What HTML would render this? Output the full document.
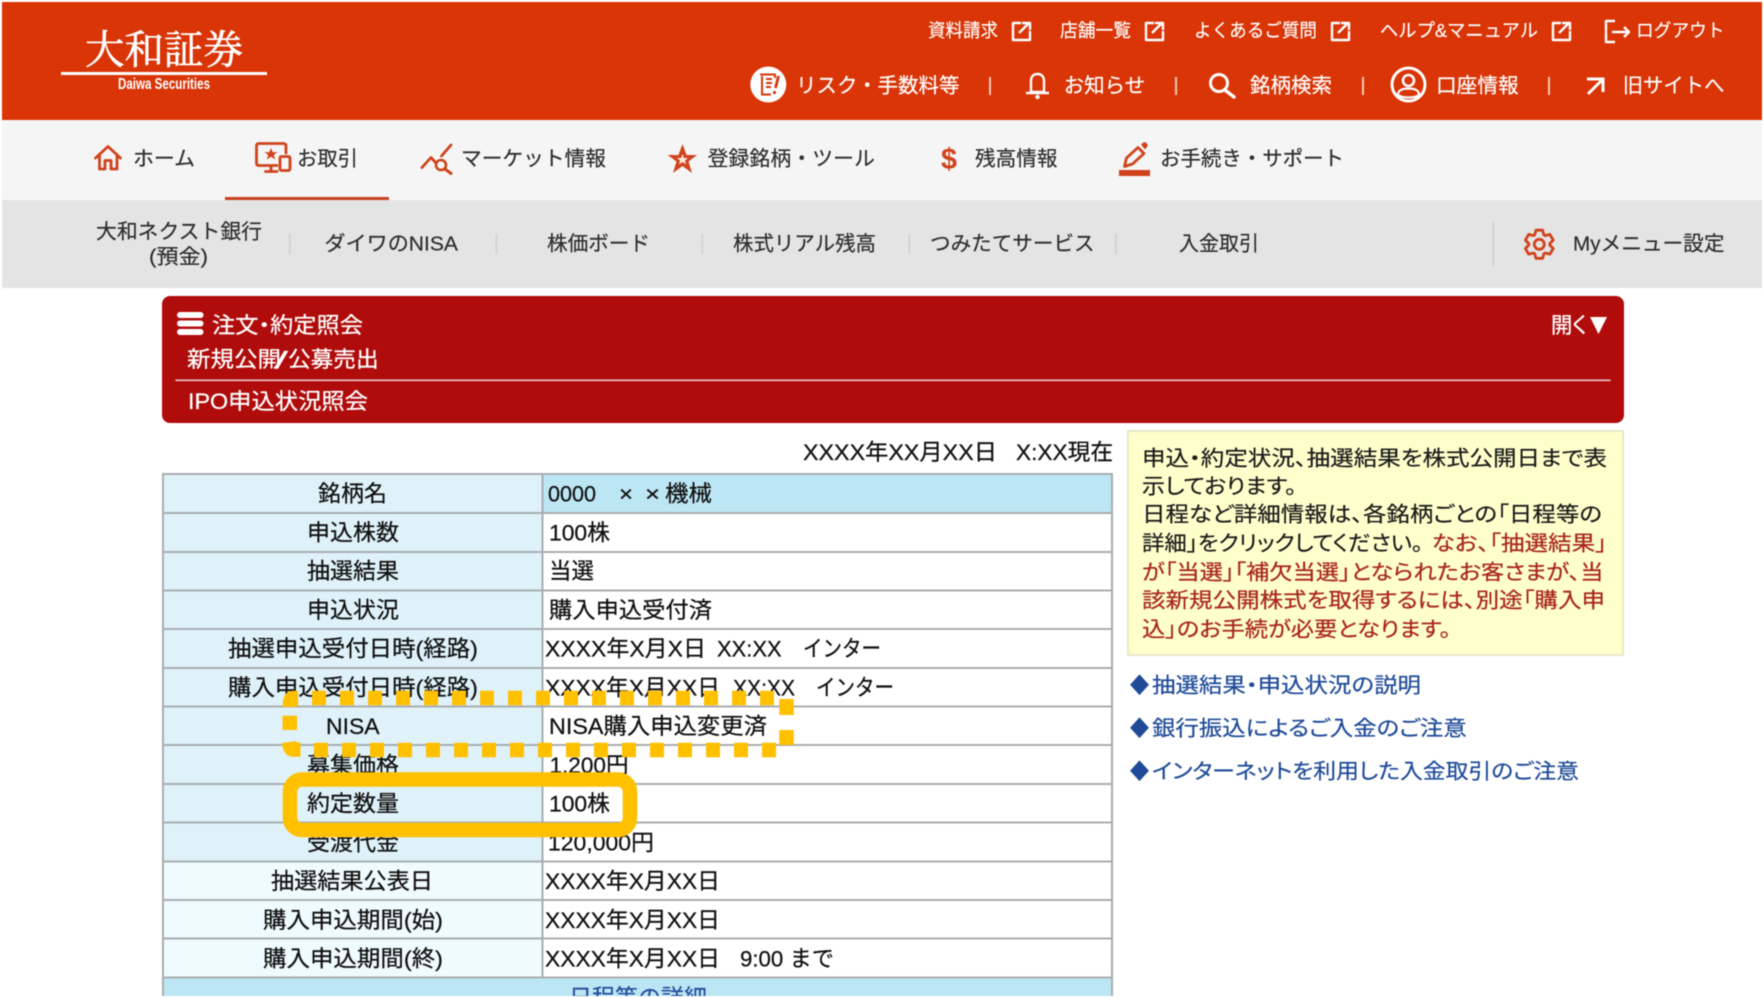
<!DOCTYPE html>
<html lang="ja">
<head>
<meta charset="utf-8">
<title>大和証券 IPO申込状況照会</title>
<style>
html,body{margin:0;padding:0;background:#fff;width:1764px;height:998px;overflow:hidden}
svg{display:block;position:absolute;left:0;top:0;filter:blur(.4px)}
text{font-family:"Liberation Sans","Noto Sans CJK JP",sans-serif}
.h1{font-size:18.5px;fill:#fff;stroke:#fff;stroke-width:.15}
.h2{font-size:20.5px;fill:#fff;stroke:#fff;stroke-width:.2}
.n{font-size:20.5px;fill:#2e2e2e;stroke:#2e2e2e;stroke-width:.2}
.s{font-size:20.5px;fill:#2e2e2e;stroke:#2e2e2e;stroke-width:.2}
.r{font-size:22px;fill:#fff;stroke:#fff;stroke-width:.25;font-feature-settings:"palt"}
.t{font-size:22.5px;fill:#111;stroke:#111;stroke-width:.25}
.c{font-size:21px;fill:#1a1a1a;stroke:#1a1a1a;stroke-width:.2;font-feature-settings:"palt"}
.e{font-size:21px;fill:#a8241a;stroke:#a8241a;stroke-width:.2;font-feature-settings:"palt"}
.l{font-size:21px;fill:#1e4a98;stroke:#1e4a98;stroke-width:.2;font-feature-settings:"palt"}
.ico{fill:none;stroke:#d0431c;stroke-width:2.8;stroke-linecap:round;stroke-linejoin:round}
.w{fill:none;stroke:#fff;stroke-width:2.4;stroke-linejoin:round}
</style>
</head>
<body>
<svg width="1764" height="998" viewBox="0 0 1764 998" xmlns="http://www.w3.org/2000/svg">
<rect width="1764" height="998" fill="#fff"/>
<!-- header -->
<rect x="2" y="2" width="1760" height="118" fill="#d93507"/>
<rect x="2" y="120" width="1760" height="80" fill="#f5f5f5"/>
<rect x="2" y="200" width="1760" height="88" fill="#e4e4e4"/>
<!-- logo -->
<text x="85" y="63.5" font-size="40" fill="#fff" stroke="#fff" stroke-width=".6" textLength="158" lengthAdjust="spacingAndGlyphs" style="font-family:'Liberation Serif','Noto Serif CJK SC',serif">大和証券</text>
<rect x="61" y="72" width="206" height="3" fill="#fff"/>
<text x="118" y="89" font-size="16" font-weight="700" fill="#fff" textLength="92" lengthAdjust="spacingAndGlyphs">Daiwa Securities</text>
<!-- top links -->
<text class="h1" x="928" y="37" textLength="70" lengthAdjust="spacingAndGlyphs">資料請求</text>
<g transform="translate(1011,21)"><path class="w" d="M10 2H2V19H19V10M8 12L18 2M11 2H19V9"/></g>
<text class="h1" x="1060" y="37" textLength="71" lengthAdjust="spacingAndGlyphs">店舗一覧</text>
<g transform="translate(1144,21)"><path class="w" d="M10 2H2V19H19V10M8 12L18 2M11 2H19V9"/></g>
<text class="h1" x="1194" y="37" textLength="123" lengthAdjust="spacingAndGlyphs">よくあるご質問</text>
<g transform="translate(1330,21)"><path class="w" d="M10 2H2V19H19V10M8 12L18 2M11 2H19V9"/></g>
<text class="h1" x="1380" y="37" textLength="158" lengthAdjust="spacingAndGlyphs">ヘルプ&amp;マニュアル</text>
<g transform="translate(1551,21)"><path class="w" d="M10 2H2V19H19V10M8 12L18 2M11 2H19V9"/></g>
<path class="w" d="M1615 21H1606V42H1615M1612 32H1629M1624 27L1629 32L1624 37" stroke-width="2.6"/>
<text class="h1" x="1636" y="37" textLength="88.5" lengthAdjust="spacingAndGlyphs">ログアウト</text>
<!-- second row -->
<circle cx="768.3" cy="84.5" r="18" fill="#fff"/>
<path d="M760 74.5H775V78M762 76V94.5H771M766 79H772M766 83H772M766 87H771" fill="none" stroke="#d93507" stroke-width="2"/>
<path d="M778.5 76L775.5 88" stroke="#d93507" stroke-width="2.8"/>
<circle cx="774.5" cy="92.5" r="1.6" fill="#d93507"/>
<text class="h2" x="796" y="92.5" textLength="163.5" lengthAdjust="spacingAndGlyphs">リスク・手数料等</text>
<rect x="989" y="77" width="2" height="18" fill="#f6c9b8"/>
<path class="w" d="M1031 92V81C1031 76 1034 74 1037.5 74C1041 74 1044 76 1044 81V92Z M1026 93H1049" stroke-width="2.6"/>
<circle cx="1037.5" cy="97" r="2.2" fill="#fff"/>
<text class="h2" x="1063.7" y="92.5" textLength="81.5" lengthAdjust="spacingAndGlyphs">お知らせ</text>
<rect x="1175" y="77" width="2" height="18" fill="#f6c9b8"/>
<circle cx="1219" cy="83" r="8.5" fill="none" stroke="#fff" stroke-width="3"/>
<path d="M1225 90L1234 97" stroke="#fff" stroke-width="3.4" stroke-linecap="round"/>
<text class="h2" x="1250" y="92.5" textLength="82" lengthAdjust="spacingAndGlyphs">銘柄検索</text>
<rect x="1362" y="77" width="2" height="18" fill="#f6c9b8"/>
<circle cx="1408.5" cy="84.5" r="16.5" fill="none" stroke="#fff" stroke-width="3"/>
<circle cx="1408.5" cy="80.5" r="5.5" fill="none" stroke="#fff" stroke-width="2.6"/>
<path d="M1398 94.5C1398 90 1403 88.5 1408.5 88.5C1414 88.5 1419 90 1419 94.5C1416 98.5 1401 98.5 1398 94.5Z" fill="none" stroke="#fff" stroke-width="2.2"/>
<text class="h2" x="1436" y="92.5" textLength="82.7" lengthAdjust="spacingAndGlyphs">口座情報</text>
<rect x="1548" y="77" width="2" height="18" fill="#f6c9b8"/>
<path d="M1587 79H1603V92M1603 79L1588 94" fill="none" stroke="#fff" stroke-width="3"/>
<text class="h2" x="1622.7" y="92.5" textLength="101.8" lengthAdjust="spacingAndGlyphs">旧サイトへ</text>
<!-- main nav -->
<path class="ico" d="M95.5 158L108 146.5L120.5 158M99.5 156V169H105V160.5H111V169H117V156"/>
<text class="n" x="133" y="165.5" textLength="62" lengthAdjust="spacingAndGlyphs">ホーム</text>
<path class="ico" d="M286 153V146Q286 143.5 283 143.5H259Q256.5 143.5 256.5 146V163Q256.5 165.5 259 165.5H277M271 166V171M265.5 171.5H277"/>
<rect class="ico" x="280" y="156.5" width="10" height="14" rx="1.5" stroke-width="2.2"/>
<path d="M271 148L272.8 152.2H277.4L273.8 155L275.2 159.5L271 156.8L266.8 159.5L268.2 155L264.6 152.2H269.2Z" fill="#d0431c"/>
<text class="n" x="297" y="165.5" textLength="61" lengthAdjust="spacingAndGlyphs">お取引</text>
<rect x="225" y="197" width="164" height="3" fill="#c8401f"/>
<path class="ico" d="M422 167.5L431 157.5L436 163M441.5 156L451 145"/>
<circle cx="441" cy="165" r="5" fill="none" stroke="#d0431c" stroke-width="2.6"/>
<path d="M445 169L451 173.5" stroke="#d0431c" stroke-width="3" stroke-linecap="round"/>
<text class="n" x="461" y="165.5" textLength="145" lengthAdjust="spacingAndGlyphs">マーケット情報</text>
<path d="M682.5 144L686.5 155H697L688.5 161.5L692 173L682.5 166L673 173L676.5 161.5L667.6 155H678.5Z" fill="#d0431c"/>
<path d="M682.5 154L684 158H688L685 160.5L686 164.5L682.5 162L679 164.5L680 160.5L677 158H681Z" fill="#fbe6df"/>
<text class="n" x="707.5" y="165.5" textLength="167.5" lengthAdjust="spacingAndGlyphs">登録銘柄・ツール</text>
<text x="941" y="169" font-size="30" font-weight="700" fill="#d0431c" textLength="16" lengthAdjust="spacingAndGlyphs" style="font-family:'Liberation Sans',sans-serif">$</text>
<text class="n" x="975" y="165.5" textLength="82.5" lengthAdjust="spacingAndGlyphs">残高情報</text>
<path class="ico" d="M1124.5 166.5L1126.5 158L1138 147.5L1144 153.5L1132.5 164Z"/>
<path d="M1141 144.5L1143.5 142.5Q1145 141.5 1146.5 143L1147.5 144.5Q1148 146 1147 147L1145 149.5Z" fill="#d0431c"/>
<rect x="1119" y="170" width="31" height="6" fill="#d0431c"/>
<text class="n" x="1160" y="165.5" textLength="184" lengthAdjust="spacingAndGlyphs">お手続き・サポート</text>
<!-- sub nav -->
<text class="s" x="96" y="238.5" textLength="166" lengthAdjust="spacingAndGlyphs">大和ネクスト銀行</text>
<text class="s" x="149" y="263.5" textLength="59" lengthAdjust="spacingAndGlyphs">(預金)</text>
<g fill="#cfcfcf">
<rect x="289" y="234" width="1.6" height="20"/><rect x="495.5" y="234" width="1.6" height="20"/><rect x="701.5" y="234" width="1.6" height="20"/><rect x="908.5" y="234" width="1.6" height="20"/><rect x="1115" y="234" width="1.6" height="20"/><rect x="1492.5" y="222" width="1.6" height="44"/>
</g>
<text class="s" x="324.5" y="250.5" textLength="133.5" lengthAdjust="spacingAndGlyphs">ダイワのNISA</text>
<text class="s" x="547" y="250.5" textLength="103" lengthAdjust="spacingAndGlyphs">株価ボード</text>
<text class="s" x="733" y="250.5" textLength="143" lengthAdjust="spacingAndGlyphs">株式リアル残高</text>
<text class="s" x="930" y="250.5" textLength="164.6" lengthAdjust="spacingAndGlyphs">つみたてサービス</text>
<text class="s" x="1179" y="250.5" textLength="80" lengthAdjust="spacingAndGlyphs">入金取引</text>
<g transform="translate(1539.3,244.3)">
<path d="M-4.6 -9.4L-3.3 -14.1L3.3 -14.1L4.6 -9.4L5.9 -8.7L10.6 -9.9L13.9 -4.2L10.5 -.7L10.5 .7L13.9 4.2L10.6 9.9L5.9 8.7L4.6 9.4L3.3 14.1L-3.3 14.1L-4.6 9.4L-5.9 8.7L-10.6 9.9L-13.9 4.2L-10.5 .7L-10.5 -.7L-13.9 -4.2L-10.6 -9.9L-5.9 -8.7Z" fill="none" stroke="#d0431c" stroke-width="2.8" stroke-linejoin="round"/>
<circle r="5" fill="none" stroke="#d0431c" stroke-width="2.8"/>
</g>
<text class="s" x="1573" y="250.5" textLength="151.5" lengthAdjust="spacingAndGlyphs">Myメニュー設定</text>
<!-- red title box -->
<rect x="162" y="296" width="1462" height="127" rx="8" fill="#b00c0c"/>
<g fill="#fff"><rect x="177" y="312" width="26.5" height="6" rx="3"/><rect x="177" y="320.5" width="26.5" height="6" rx="3"/><rect x="177" y="329" width="26.5" height="6" rx="3"/></g>
<text class="r" x="212" y="333" textLength="151" lengthAdjust="spacingAndGlyphs">注文・約定照会</text>
<text class="r" x="187" y="367" textLength="94" lengthAdjust="spacingAndGlyphs">新規公開</text>
<text class="r" x="275" y="367" textLength="13" lengthAdjust="spacingAndGlyphs">/</text>
<text class="r" x="288" y="367" textLength="90.6" lengthAdjust="spacingAndGlyphs">公募売出</text>
<rect x="175.5" y="379.5" width="1435" height="1.6" fill="#ecc9c9"/>
<text class="r" x="188" y="409" textLength="180" lengthAdjust="spacingAndGlyphs">IPO申込状況照会</text>
<text class="r" x="1551" y="333" textLength="36" lengthAdjust="spacingAndGlyphs">開く</text>
<path d="M1590 317H1607L1598.5 334Z" fill="#fff"/>
<!-- date -->
<text class="t" x="803" y="460" textLength="194" lengthAdjust="spacingAndGlyphs">XXXX年XX月XX日</text>
<text class="t" x="1016" y="460" textLength="97" lengthAdjust="spacingAndGlyphs">X:XX現在</text>
<!-- table -->
<rect x="163" y="474" width="379" height="387.5" fill="#dff2f9"/>
<rect x="163" y="861.5" width="379" height="116" fill="#f0fbff"/>
<rect x="542" y="474" width="570" height="38.75" fill="#bde6f4"/>
<rect x="163" y="977.5" width="949" height="20" fill="#bde6f4"/>
<g fill="#a9adb0">
<rect x="163" y="473" width="949" height="2"/><rect x="163" y="512" width="949" height="2"/><rect x="163" y="551" width="949" height="2"/><rect x="163" y="589.5" width="949" height="2"/><rect x="163" y="628" width="949" height="2"/><rect x="163" y="667" width="949" height="2"/><rect x="163" y="705.5" width="949" height="2"/><rect x="163" y="744" width="949" height="2"/><rect x="163" y="783" width="949" height="2"/><rect x="163" y="821.5" width="949" height="2"/><rect x="163" y="860.5" width="949" height="2"/><rect x="163" y="899" width="949" height="2"/><rect x="163" y="937.5" width="949" height="2"/><rect x="163" y="976.5" width="949" height="2"/>
<rect x="162" y="473" width="2" height="525"/><rect x="541.5" y="473" width="2" height="504"/><rect x="1111" y="473" width="2" height="525"/>
</g>
<text class="t" x="318" y="501.7" textLength="69" lengthAdjust="spacingAndGlyphs">銘柄名</text>
<text class="t" x="307" y="540.5" textLength="92" lengthAdjust="spacingAndGlyphs">申込株数</text>
<text class="t" x="307" y="579.2" textLength="92" lengthAdjust="spacingAndGlyphs">抽選結果</text>
<text class="t" x="307" y="618" textLength="92" lengthAdjust="spacingAndGlyphs">申込状況</text>
<text class="t" x="228" y="656.7" textLength="250" lengthAdjust="spacingAndGlyphs">抽選申込受付日時(経路)</text>
<text class="t" x="228" y="695.5" textLength="250" lengthAdjust="spacingAndGlyphs">購入申込受付日時(経路)</text>
<text class="t" x="326" y="734.2" textLength="53.6" lengthAdjust="spacingAndGlyphs">NISA</text>
<text class="t" x="307" y="773" textLength="92" lengthAdjust="spacingAndGlyphs">募集価格</text>
<text class="t" x="307" y="811.7" textLength="92" lengthAdjust="spacingAndGlyphs">約定数量</text>
<text class="t" x="307" y="850.5" textLength="92" lengthAdjust="spacingAndGlyphs">受渡代金</text>
<text class="t" x="271" y="889.2" textLength="162" lengthAdjust="spacingAndGlyphs">抽選結果公表日</text>
<text class="t" x="263" y="928" textLength="180" lengthAdjust="spacingAndGlyphs">購入申込期間(始)</text>
<text class="t" x="263" y="966.7" textLength="180" lengthAdjust="spacingAndGlyphs">購入申込期間(終)</text>
<text class="t" x="548" y="501.7" textLength="48" lengthAdjust="spacingAndGlyphs">0000</text>
<text class="t" x="619" y="501.7" textLength="14" lengthAdjust="spacingAndGlyphs">×</text>
<text class="t" x="645" y="501.7" textLength="15" lengthAdjust="spacingAndGlyphs">×</text>
<text class="t" x="665" y="501.7" textLength="47" lengthAdjust="spacingAndGlyphs">機械</text>
<text class="t" x="549" y="540.5" textLength="61" lengthAdjust="spacingAndGlyphs">100株</text>
<text class="t" x="549" y="579.2" textLength="45" lengthAdjust="spacingAndGlyphs">当選</text>
<text class="t" x="549" y="618" textLength="163" lengthAdjust="spacingAndGlyphs">購入申込受付済</text>
<text class="t" x="545" y="656.7" textLength="161" lengthAdjust="spacingAndGlyphs">XXXX年X月X日</text>
<text class="t" x="717" y="656.7" textLength="64.6" lengthAdjust="spacingAndGlyphs">XX:XX</text>
<text class="t" x="803" y="656.7" textLength="78" lengthAdjust="spacingAndGlyphs">インター</text>
<text class="t" x="545" y="695.5" textLength="175" lengthAdjust="spacingAndGlyphs">XXXX年X月XX日</text>
<text class="t" x="733" y="695.5" textLength="62" lengthAdjust="spacingAndGlyphs">XX:XX</text>
<text class="t" x="816" y="695.5" textLength="78" lengthAdjust="spacingAndGlyphs">インター</text>
<text class="t" x="549" y="734.2" textLength="218" lengthAdjust="spacingAndGlyphs">NISA購入申込変更済</text>
<text class="t" x="549.5" y="773" textLength="79" lengthAdjust="spacingAndGlyphs">1,200円</text>
<text class="t" x="549" y="811.7" textLength="61" lengthAdjust="spacingAndGlyphs">100株</text>
<text class="t" x="548" y="850.5" textLength="106" lengthAdjust="spacingAndGlyphs">120,000円</text>
<text class="t" x="545" y="889.2" textLength="175" lengthAdjust="spacingAndGlyphs">XXXX年X月XX日</text>
<text class="t" x="545" y="928" textLength="175" lengthAdjust="spacingAndGlyphs">XXXX年X月XX日</text>
<text class="t" x="545" y="966.7" textLength="175" lengthAdjust="spacingAndGlyphs">XXXX年X月XX日</text>
<text class="t" x="740" y="966.7" textLength="94" lengthAdjust="spacingAndGlyphs">9:00 まで</text>
<text class="t" x="569" y="1005.5" textLength="138" lengthAdjust="spacingAndGlyphs" style="fill:#234f9c;stroke:#234f9c">日程等の詳細</text>
<rect x="0" y="996" width="1764" height="2" fill="#fff"/>
<!-- overlays -->
<g fill="none" stroke="#ffc000" stroke-width="14.5">
<path d="M312 698H774" stroke-dasharray="14 14"/>
<path d="M314 750H776" stroke-dasharray="14 14"/>
<path d="M289.8 715.7V730"/>
<path d="M298 698H293Q289.8 698 289.8 707"/>
<path d="M300.5 749.5H293Q290 749.5 289 742"/>
<path d="M786.5 699V715"/>
<path d="M786.5 730V745"/>
<rect x="290" y="779.5" width="340" height="50.5" rx="12"/>
</g>
<!-- note -->
<rect x="1128" y="431" width="495" height="224" fill="#ffffcc" stroke="#e8e8cc" stroke-width="2"/>
<text class="c" x="1142" y="465.7" textLength="465" lengthAdjust="spacingAndGlyphs">申込・約定状況、抽選結果を株式公開日まで表</text>
<text class="c" x="1142" y="493.4" textLength="154.5" lengthAdjust="spacingAndGlyphs">示しております。</text>
<text class="c" x="1142" y="521.7" textLength="460" lengthAdjust="spacingAndGlyphs">日程など詳細情報は、各銘柄ごとの「日程等の</text>
<text class="c" x="1142" y="550.7" textLength="281" lengthAdjust="spacingAndGlyphs">詳細」をクリックしてください。</text>
<text class="e" x="1431.6" y="550.7" textLength="175.4" lengthAdjust="spacingAndGlyphs">なお、「抽選結果」</text>
<text class="e" x="1142" y="579.4" textLength="461.5" lengthAdjust="spacingAndGlyphs">が「当選」「補欠当選」となられたお客さまが、当</text>
<text class="e" x="1142" y="607.7" textLength="463" lengthAdjust="spacingAndGlyphs">該新規公開株式を取得するには、別途「購入申</text>
<text class="e" x="1142" y="636.7" textLength="309" lengthAdjust="spacingAndGlyphs">込」のお手続が必要となります。</text>
<!-- links -->
<text class="l" x="1130" y="692.7" textLength="19" lengthAdjust="spacingAndGlyphs">◆</text>
<text class="l" x="1152" y="692.7" textLength="269" lengthAdjust="spacingAndGlyphs">抽選結果・申込状況の説明</text>
<text class="l" x="1130" y="735.7" textLength="19" lengthAdjust="spacingAndGlyphs">◆</text>
<text class="l" x="1152" y="735.7" textLength="314.7" lengthAdjust="spacingAndGlyphs">銀行振込によるご入金のご注意</text>
<text class="l" x="1130" y="778.4" textLength="19" lengthAdjust="spacingAndGlyphs">◆</text>
<text class="l" x="1152" y="778.4" textLength="427" lengthAdjust="spacingAndGlyphs">インターネットを利用した入金取引のご注意</text>
</svg>
</body>
</html>
